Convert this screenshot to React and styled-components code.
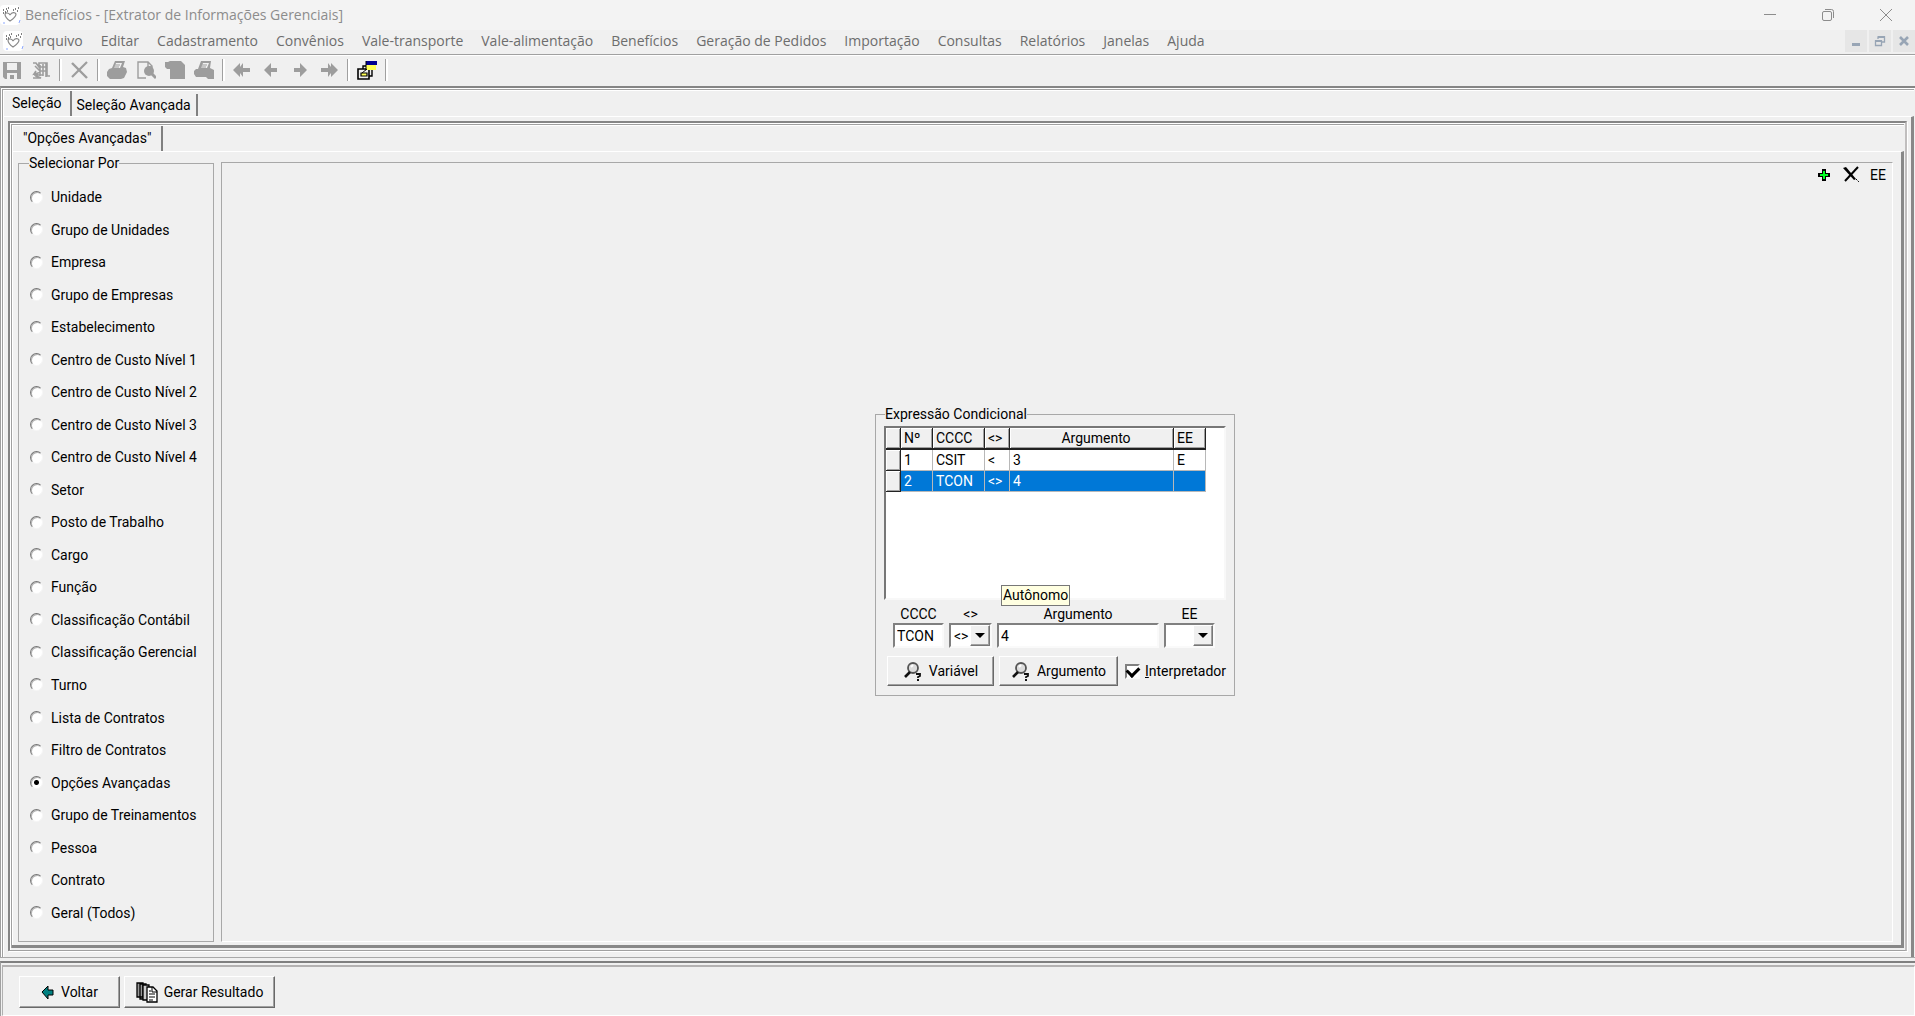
import React, { useState } from 'react';
import styled, { createGlobalStyle, css } from 'styled-components';

const Global = createGlobalStyle`
  * { box-sizing: border-box; }
  body { margin: 0; background: #f0f0f0; color: #000; font: 14px/16px Roboto, "Liberation Sans", sans-serif; }
  button, input, select { font: inherit; color: inherit; margin: 0; border-radius: 0; }
`;

const Window = styled.div`display: flex; flex-direction: column; min-height: 100vh;`;

const TitleBar = styled.header`
  display: flex; align-items: center; height: 30px; background: #f3f3f3; color: #8c8c8c;
  font: 14px/20px "Open Sans", "Noto Sans", sans-serif;
`;
const Title = styled.h1`flex: 1; margin: 0; padding-left: 4px; font: inherit;`;
const CaptionButton = styled.button`
  display: flex; align-items: center; justify-content: center; width: 58px; height: 30px;
  padding: 0; border: 0; background: none; color: #8c8c8c;
`;

const MenuBar = styled.nav`
  display: flex; align-items: center; height: 24px; padding: 0 0 2px 3px; color: #6d6d6d;
  font: 14px/20px "Open Sans", "Noto Sans", sans-serif;
`;
const MenuItems = styled.div`display: flex; flex: 1; gap: 18px; padding-left: 8px;`;
const MenuItem = styled.button`padding: 0; border: 0; background: none; white-space: nowrap;`;
const ChildButtons = styled.div`display: flex; gap: 2px;`;
const ChildButton = styled.button`
  display: flex; align-items: center; justify-content: center; width: 22px; height: 22px;
  padding: 0; border: 0; background: #e6e6e6; color: #98a5b5;
`;

const ToolBar = styled.div`
  display: flex; align-items: center; gap: 1px; height: 32px; margin-left: -2px; padding-bottom: 2px;
  border-top: 1px solid #a0a0a0; box-shadow: inset 0 1px #fff; color: #9d9d9d;
`;
const ToolButton = styled.button`
  display: flex; align-items: center; justify-content: center; width: 28px; height: 24px;
  padding: 0; border: 0; background: none; color: inherit;
`;
const Divider = styled.span`
  display: flex; justify-content: center; width: 8px; height: 22px;
  &::before { content: ''; width: 2px; border-left: 1px solid #a0a0a0; background: #fff; }
`;

const Outer = styled.main`
  display: flex; flex: 1; flex-direction: column; padding: 1px;
  border-top: 2px solid #858585; border-left: 1px solid #a0a0a0; box-shadow: inset 1px 1px #fff;
`;
const TabSheet = styled.section`
  display: flex; flex: 1; flex-direction: column;
  border: 1px solid #a0a0a0; border-width: 1px 0 0 1px; box-shadow: inset 1px 1px #fff;
`;
const Tabs = styled.div`display: flex; align-items: flex-end; height: 26px; padding-left: 1px;`;
const Tab = styled.button`
  height: ${p => (p.$active ? 25 : 22)}px; padding: 0 ${p => p.$pad}px; border: 0;
  border-right: 2px solid #808080; background: none; white-space: nowrap;
  padding-bottom: ${p => (p.$active ? 2 : 0)}px;
`;
const Page = styled.div`
  display: flex; flex: 1; padding: 4px 4px 6px 5px;
  border-top: 1px solid #fff; border-right: 3px solid #888; border-bottom: 3px solid #888;
`;
const InnerFrame = styled.div`
  display: flex; flex: 1; padding: 1px 1px 2px 1px;
  border: 2px solid #858585; border-right: 2px solid #c0bebe; border-bottom: 1px solid #a0a0a0;
  box-shadow: 1px 1px #fff, inset 1px 1px #fff;
`;
const Columns = styled.div`
  display: flex; flex: 1; gap: 7px; padding: 3px 8px 3px 6px;
  border-top: 1px solid #fff; border-right: 3px solid #888; border-bottom: 3px solid #888;
`;

const FilterGroup = styled.fieldset`
  display: flex; width: 196px; margin: 0; padding: 16px 10px 18px 11px; border: 1px solid #a8a8a8;
`;
const Legend = styled.legend`margin-left: ${p => p.$shift}px; padding: 0; line-height: 16px;`;
const RadioList = styled.div`display: flex; flex: 1; flex-direction: column; justify-content: space-between;`;
const RadioLabel = styled.label`display: flex; align-items: center; gap: 8px; height: 20px; white-space: nowrap;`;
const Radio = styled.input`
  appearance: none; width: 13px; height: 13px; border: 1px solid; border-radius: 50%;
  border-color: #777 #f6f6f6 #f6f6f6 #777; background: #fff; box-shadow: inset 1px 1px #b5b5b5;
  &:checked { background: radial-gradient(circle, #000 0 2px, #fff 3px); }
`;

const Canvas = styled.div`
  display: flex; flex: 1; flex-direction: column; margin-top: 7px;
  border: 1px solid #a8a8a8; border-right-color: #fff; border-bottom-color: #fff;
`;
const CanvasTools = styled.div`display: flex; align-items: center; justify-content: flex-end; gap: 5px; height: 24px; padding-right: 3px;`;
const CanvasButton = styled.button`
  display: flex; align-items: center; justify-content: center; width: 22px; height: 22px;
  padding: 0; border: 0; background: none;
`;
const Center = styled.div`display: flex; flex: 1; align-items: center; justify-content: center; padding: 0 4px 26px 0;`;

const Expression = styled.fieldset`
  position: relative; width: 360px; min-width: 0; margin: 0; padding: 4px 8px 9px; border: 1px solid #a8a8a8;
`;
const GridBox = styled.div`
  height: 174px; border: 2px solid; border-color: #777 #f8f8f8 #f8f8f8 #777; background: #fff;
`;
const Grid = styled.table`width: 320px; table-layout: fixed; border-collapse: separate; border-spacing: 0;`;
const Head = styled.th`
  width: ${p => p.$w}px; height: 22px; padding: 0 3px; background: #f0f0f0; font-weight: 400;
  text-align: left; ${p => p.$wide && css`padding-left: 12px; text-align: center;`}
  border-right: 1px solid #222; border-bottom: 2px solid #222; box-shadow: inset 1px 1px #fff, inset -1px -1px #a0a0a0;
`;
const Cell = styled.td`
  height: 21px; padding: 0 3px; border-right: 1px solid #b8b8b8; border-bottom: 1px solid #b8b8b8;
  ${p => p.$selected && css`background: #0078d7; color: #fff;`}
`;
const Marker = styled.td`
  height: 21px; padding: 0; background: #f0f0f0; border-right: 1px solid #222; border-bottom: 1px solid #222;
  box-shadow: inset 1px 1px #fff, inset -1px -1px #a0a0a0;
`;
const Fields = styled.div`
  display: grid; grid-template-columns: 51px 43px 162px 51px; column-gap: 5px; margin: 6px 0 0 9px;
`;
const Field = styled.div`display: flex; flex-direction: column;`;
const FieldLabel = styled.label`height: 17px; text-align: center;`;
const sunken = css`border: 2px solid; border-color: #808080 #fafafa #fafafa #808080; background: #fff;`;
const TextBox = styled.input`width: 100%; height: 25px; padding: 0 2px; outline: 0; ${sunken}`;
const Combo = styled.div`display: grid; grid-template-columns: 1fr 20px; height: 25px; ${sunken}`;
const Select = styled.select`
  grid-area: 1 / 1 / 2 / 3; width: 100%; padding: 0 0 0 3px; border: 0; outline: 0; appearance: none; background: none;
`;
const Arrow = styled.span`
  grid-area: 1 / 2; display: flex; align-items: center; justify-content: center; pointer-events: none;
  background: #f0f0f0; border: 1px solid; border-color: #fff #777 #777 #fff; box-shadow: inset -1px -1px #a0a0a0;
  &::before { content: ''; border: 5px solid transparent; border-top-color: #000; border-bottom: 0; }
`;
const Actions = styled.div`display: flex; align-items: center; gap: 5px; margin: 8px 0 0 3px;`;
const PushButton = styled.button`
  display: flex; align-items: center; justify-content: center; gap: 6px; white-space: nowrap;
  width: ${p => p.$w}px; height: ${p => p.$h || 30}px; padding: 0; background: #f0f0f0;
  border: 1px solid; border-color: #fff #696969 #696969 #fff; box-shadow: inset -1px -1px #a0a0a0;
`;
const CheckLabel = styled.label`display: flex; align-items: center; gap: 5px; padding-left: 2px; white-space: nowrap;`;
const Check = styled.input`
  appearance: none; display: grid; place-items: center; width: 15px; height: 15px; ${sunken}
  &:checked::before { content: ''; width: 9px; height: 6px; border: solid #000; border-width: 0 0 3px 3px; transform: translateY(-1px) rotate(-45deg); }
`;
const Hint = styled.output`
  position: absolute; left: 125px; top: 163px; height: 21px; padding: 1px; line-height: 17px;
  border: 1px solid #777; background: #ffffe1;
`;

const FooterRail = styled.div`
  padding-top: 2px; border-top: 2px solid #808080; border-left: 1px solid #a0a0a0;
  box-shadow: 0 -3px #f0f0f0, 0 -4px #a8a8a8;
`;
const Footer = styled.footer`
  display: flex; gap: 4px; height: 51px; margin-left: 1px; padding: 9px 16px 0; border: 1px solid #b0b0b0;
  border-top: 2px solid #b4b2b2; border-bottom-color: #fff; border-right-color: #fff;
`;

const Logo = () => (
  <svg width="21" height="21" viewBox="0 0 21 21" aria-hidden="true">
    <rect x="0" y="0" width="20" height="20" rx="4" fill="#fff" />
    <path d="M10 10C9 8 6 7 5 9C5 11 7 14 10 16C13 14 16 12 16 9C15 7 12 7 10 10" fill="none" stroke="#888" strokeWidth="1.2" />
    <path d="M3 5h1M6 4h1M8 3h1M7 6h1M13 5h1M15 4h1M18 3h1M17 6h1M3 8h1M5 7h1" stroke="#555" strokeWidth="1.4" />
    <path d="M19 18l1-3M3 18h2" stroke="#8ba7ff" />
  </svg>
);

const shapes = {
  save: <><path d="M1 2h18v17H3l-2-2z" fill="currentColor" /><path d="M5 3h10v7H5z" fill="#f0f0f0" /><path d="M5 13h10v6h-3v-4H8v4H5z" fill="#f0f0f0" /></>,
  exit: <><path d="M2 3h3l3 4V3h8v13h3M2 18h8l-5-2 2-3-4 1 2-3M9 5v11M12 4v12M15 3v14M8 7h7M8 11h7M4 6l5 5M3 15h9" fill="none" stroke="currentColor" strokeWidth="1.6" /></>,
  remove: <><path d="M3 3L18 18" stroke="currentColor" strokeWidth="2.4" /><path d="M18 2L3 17" stroke="currentColor" strokeWidth="2.2" /></>,
  print: <><path d="M5 8L8 1h10l-2 6 3 1 1 4-3 6-3 1H3l-3-3v-4l2-3z" fill="currentColor" /><path d="M9 3h6l-2 5H7z" fill="#f0f0f0" /><path d="M8 5h5M7 7h5" stroke="currentColor" /></>,
  preview: <><path d="M10 18H2V2h10l4 4v3M12 2v5h4" fill="none" stroke="currentColor" strokeWidth="1.4" /><circle cx="13" cy="11" r="5" fill="currentColor" /><path d="M16 14l4 4" stroke="currentColor" strokeWidth="3" /></>,
  page: <path d="M0 2h3l2-1h11l4 4v14H5V9H2L0 7z" fill="currentColor" />,
  printer: <><path d="M4 9L7 1h10l-1 7 4 2v9h-6l-2-2H2l-2-3v-3l2-2z" fill="currentColor" /><path d="M9 3h6l-2 5H7z" fill="#f0f0f0" /><path d="M8 5h5M7 7h5" stroke="currentColor" /></>,
  first: <path d="M1 10l7-7v4l3-4v5h7v4h-7v5l-3-4v4z" fill="currentColor" />,
  prev: <path d="M3 10l7-7v5h6v4h-6v5z" fill="currentColor" />,
  next: <path d="M17 10l-7-7v5H4v4h6v5z" fill="currentColor" />,
  last: <path d="M19 10l-7-7v4L9 3v5H2v4h7v5l3-4v4z" fill="currentColor" />,
  windows: <><path d="M6 6h9v10H6z" fill="#f0f0f0" stroke="#000" strokeWidth="1.4" /><path d="M1 9h11v10H1z" fill="#f0f0f0" stroke="#000" strokeWidth="1.6" /><path d="M4 13h6v3H4z" fill="#ffff54" stroke="#000" strokeWidth="1.2" /><path d="M9 1h11v4H9z" fill="#000091" /><path d="M9 5h10v5H9z" fill="#ffff54" /><path d="M9 1v9M5 13l5-4" fill="none" stroke="#000" strokeWidth="1" /></>,
};
const ToolIcon = ({ name }) => <svg width="20" height="20" viewBox="0 0 20 20" aria-hidden="true">{shapes[name]}</svg>;

const Lens = () => (
  <svg width="20" height="20" viewBox="0 0 20 20" aria-hidden="true">
    <circle cx="10" cy="7" r="5" fill="#ddd" stroke="#555" strokeWidth="1.8" />
    <path d="M8 6l2-2" stroke="#fff" strokeWidth="2" />
    <path d="M7 11l-5 5" stroke="#111" strokeWidth="2.6" />
    <path d="M13 13h4v2l-2 1v1M14 19h2" fill="none" stroke="#111" strokeWidth="1.8" />
  </svg>
);
const BackArrow = () => (
  <svg width="14" height="14" viewBox="0 0 14 14" aria-hidden="true">
    <path d="M1 7l6-6v4h5v5H7v4z" fill="#008080" stroke="#000" />
  </svg>
);
const Papers = () => (
  <svg width="22" height="21" viewBox="0 0 22 21" aria-hidden="true">
    <path d="M1 1h6v14H1zM4 2h6v15H4z" fill="#999" stroke="#000" strokeWidth="1.3" />
    <path d="M7 3h6v15H7z" fill="#ccc" stroke="#000" strokeWidth="1.3" />
    <path d="M11 5h6l4 4v11H11z" fill="#fff" stroke="#000" strokeWidth="1.3" />
    <path d="M16 5v5h5M13 9h2M13 12h6M13 15h6M13 18h4" fill="none" stroke="#000" />
  </svg>
);

const menus = ['Arquivo', 'Editar', 'Cadastramento', 'Convênios', 'Vale-transporte', 'Vale-alimentação', 'Benefícios',
  'Geração de Pedidos', 'Importação', 'Consultas', 'Relatórios', 'Janelas', 'Ajuda'];
const tools = [
  ['save', 'Salvar'], ['exit', 'Sair'], null, ['remove', 'Excluir'], null, ['print', 'Imprimir'], ['preview', 'Visualizar'],
  ['page', 'Página'], ['printer', 'Impressora'], null, ['first', 'Primeiro'], ['prev', 'Anterior'], ['next', 'Próximo'],
  ['last', 'Último'], null, ['windows', 'Janelas'], null,
];
const filters = ['Unidade', 'Grupo de Unidades', 'Empresa', 'Grupo de Empresas', 'Estabelecimento', 'Centro de Custo Nível 1',
  'Centro de Custo Nível 2', 'Centro de Custo Nível 3', 'Centro de Custo Nível 4', 'Setor', 'Posto de Trabalho', 'Cargo',
  'Função', 'Classificação Contábil', 'Classificação Gerencial', 'Turno', 'Lista de Contratos', 'Filtro de Contratos',
  'Opções Avançadas', 'Grupo de Treinamentos', 'Pessoa', 'Contrato', 'Geral (Todos)'];
const rows = [['1', 'CSIT', '<', '3', 'E'], ['2', 'TCON', '<>', '4', '']];

export default function App() {
  const [filter, setFilter] = useState('Opções Avançadas');
  const [selected, setSelected] = useState(1);

  return (
    <Window>
      <Global />
      <TitleBar>
        <Logo />
        <Title>Benefícios - [Extrator de Informações Gerenciais]</Title>
        <CaptionButton aria-label="Minimizar"><svg width="14" height="14"><path d="M1 6.5h12" stroke="currentColor" /></svg></CaptionButton>
        <CaptionButton aria-label="Restaurar"><svg width="14" height="14" fill="none" stroke="currentColor"><rect x="1.5" y="3.5" width="9" height="9" rx="1.5" /><path d="M4 1.5h6.5q2 0 2 2V10" /></svg></CaptionButton>
        <CaptionButton aria-label="Fechar"><svg width="14" height="14"><path d="M1 1l12 12M13 1L1 13" stroke="currentColor" /></svg></CaptionButton>
      </TitleBar>
      <MenuBar>
        <Logo />
        <MenuItems>{menus.map(m => <MenuItem key={m}>{m}</MenuItem>)}</MenuItems>
        <ChildButtons>
          <ChildButton aria-label="Minimizar janela"><svg width="12" height="12"><path d="M2 9.5h8" stroke="currentColor" strokeWidth="3" /></svg></ChildButton>
          <ChildButton aria-label="Restaurar janela"><svg width="12" height="12" fill="none" stroke="currentColor"><path d="M1.5 6h6v4.5h-6zM4 4V2h6.5v5H8" strokeWidth="1.3" /><path d="M1 6h7M4 2h7" strokeWidth="2" /></svg></ChildButton>
          <ChildButton aria-label="Fechar janela"><svg width="12" height="12"><path d="M2 2l8 8M10 2l-8 8" stroke="currentColor" strokeWidth="2.6" /></svg></ChildButton>
        </ChildButtons>
      </MenuBar>
      <ToolBar>
        {tools.map((t, i) => (t
          ? <ToolButton key={i} aria-label={t[1]}><ToolIcon name={t[0]} /></ToolButton>
          : <Divider key={i} />))}
      </ToolBar>
      <Outer>
        <TabSheet>
          <Tabs role="tablist">
            <Tab role="tab" aria-selected="true" $active $pad={8}>Seleção</Tab>
            <Tab role="tab" aria-selected="false" $pad={5}>Seleção Avançada</Tab>
          </Tabs>
          <Page>
            <InnerFrame>
              <TabSheet>
                <Tabs role="tablist">
                  <Tab role="tab" aria-selected="true" $active $pad={10}>"Opções Avançadas"</Tab>
                </Tabs>
                <Columns>
                  <FilterGroup>
                    <Legend $shift={-1}>Selecionar Por</Legend>
                    <RadioList>
                      {filters.map(f => (
                        <RadioLabel key={f}>
                          <Radio type="radio" name="filtro" checked={f === filter} onChange={() => setFilter(f)} />
                          {f}
                        </RadioLabel>
                      ))}
                    </RadioList>
                  </FilterGroup>
                  <Canvas>
                    <CanvasTools>
                      <CanvasButton aria-label="Adicionar"><svg width="14" height="14"><path d="M5 1h4v4h4v4H9v4H5V9H1V5h4z" fill="#000" /><path d="M7 3v8M3 7h8" stroke="#00ff21" strokeWidth="2" /></svg></CanvasButton>
                      <CanvasButton aria-label="Excluir"><svg width="18" height="18"><path d="M1 2l3-1L14 13l-2 1z" fill="#000" /><path d="M16 1L3 15" stroke="#000" strokeWidth="2" /><path d="M14 13l3 3" stroke="#000" strokeDasharray="2 1" /></svg></CanvasButton>
                      <CanvasButton>EE</CanvasButton>
                    </CanvasTools>
                    <Center>
                      <Expression>
                        <Legend $shift={1}>Expressão Condicional</Legend>
                        <GridBox>
                          <Grid>
                            <thead>
                              <tr>
                                <Head $w={15} /><Head $w={32}>Nº</Head><Head $w={52}>CCCC</Head>
                                <Head $w={25}>&lt;&gt;</Head><Head $w={164} $wide>Argumento</Head><Head $w={32}>EE</Head>
                              </tr>
                            </thead>
                            <tbody>
                              {rows.map((r, i) => (
                                <tr key={r[0]} onClick={() => setSelected(i)}>
                                  <Marker />
                                  {r.map((c, j) => <Cell key={j} $selected={i === selected}>{c}</Cell>)}
                                </tr>
                              ))}
                            </tbody>
                          </Grid>
                        </GridBox>
                        <Fields>
                          <Field><FieldLabel htmlFor="cccc">CCCC</FieldLabel><TextBox id="cccc" defaultValue="TCON" /></Field>
                          <Field>
                            <FieldLabel htmlFor="op">&lt;&gt;</FieldLabel>
                            <Combo><Select id="op" defaultValue="<>"><option>&lt;&gt;</option><option>&lt;</option></Select><Arrow /></Combo>
                          </Field>
                          <Field><FieldLabel htmlFor="arg">Argumento</FieldLabel><TextBox id="arg" defaultValue="4" /></Field>
                          <Field>
                            <FieldLabel htmlFor="ee">EE</FieldLabel>
                            <Combo><Select id="ee" defaultValue=""><option value=""></option><option>E</option></Select><Arrow /></Combo>
                          </Field>
                        </Fields>
                        <Actions>
                          <PushButton $w={107}><Lens />Variável</PushButton>
                          <PushButton $w={119}><Lens />Argumento</PushButton>
                          <CheckLabel><Check type="checkbox" defaultChecked /><span><u>I</u>nterpretador</span></CheckLabel>
                        </Actions>
                        <Hint>Autônomo</Hint>
                      </Expression>
                    </Center>
                  </Canvas>
                </Columns>
              </TabSheet>
            </InnerFrame>
          </Page>
        </TabSheet>
      </Outer>
      <FooterRail>
        <Footer>
          <PushButton $w={101} $h={32}><BackArrow />Voltar</PushButton>
          <PushButton $w={151} $h={32}><Papers />Gerar Resultado</PushButton>
        </Footer>
      </FooterRail>
    </Window>
  );
}
